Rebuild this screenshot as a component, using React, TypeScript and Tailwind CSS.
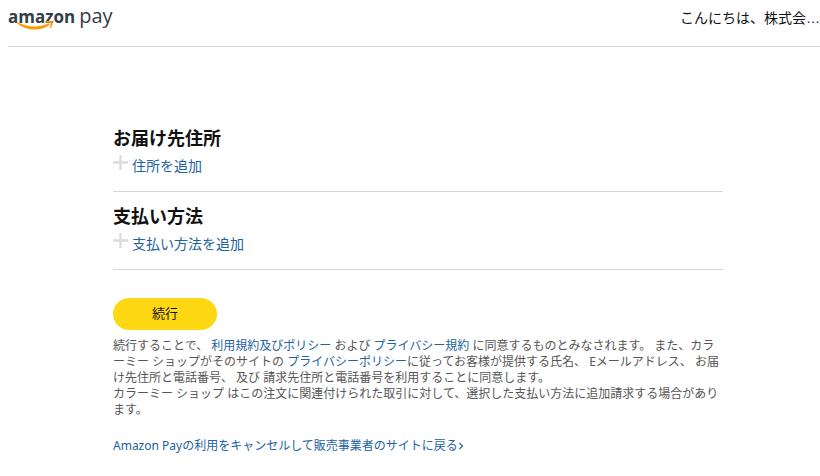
const sections = [
    { id: "address", title: "お届け先住所", action: "住所を追加" },
    { id: "payment", title: "支払い方法", action: "支払い方法を追加" },
];

const linkStyle = "text-[#2162a1] hover:underline";

const Logo = () => (
    <a href="#" aria-label="amazon pay" className="flex flex-col">
        <span className="flex items-baseline gap-1 leading-6 text-[#333e48] font-['Open_Sans',sans-serif]">
            <span className="text-[17px] font-bold">amazon</span>
            <span className="text-[20px]">pay</span>
        </span>
        <svg width="66" height="10" viewBox="0 0 66 10" className="-mt-2" aria-hidden="true">
            <path d="M9 1.500c.3-.5.8-.4 1.300-.1 9.400 5 20 5.400 30.200 1.200 1.100-.4 1.800.5.8 1.300C32.600 10.400 18.200 10 9.300 2.400c-.3-.3-.5-.6-.3-.9z" fill="#ff9900" />
            <path d="M37.800.9c2-1.400 6-1.500 6.800-.6.7.9-.1 5-2.200 6.800-.5.4-1 .1-.7-.5.7-1.500 1.400-3.900.8-4.500-.6-.6-2.900-.5-4.300-.3-.6.1-.8-.5-.4-.9z" fill="#ff9900" />
        </svg>
    </a>
);

const PlusIcon = () => (
    <svg width="15" height="15" viewBox="0 0 15 15" className="shrink-0" aria-hidden="true">
        <path d="M7.500 0v15M0 7.500h15" stroke="#dcdcdc" strokeWidth="2.400" />
    </svg>
);

export default function App() {
  return (
    <div lang="ja" className="bg-white text-[#111] font-['Noto_Sans','Noto_Sans_CJK_JP',sans-serif]">
        <header className="ml-2 h-[47px] flex justify-between items-start border-b border-[#d5d5d5]">
            <div className="pt-1">
                <Logo />
            </div>
            <span className="pt-2 text-sm leading-5 font-['Liberation_Sans','Noto_Sans_CJK_JP',sans-serif]">こんにちは、株式会…</span>
        </header>

        <main className="pl-4">
            <div className="max-w-[610px] mx-auto pt-[79px]">
                {sections.map((section) => (
                    <section key={section.id} className="h-[66px] mb-3 border-b border-[#d5d5d5]">
                        <h2 className="text-lg leading-6 font-bold">{section.title}</h2>
                        <div className="flex items-start gap-1 pt-[5px]">
                            <PlusIcon />
                            <a href="#" className={`${linkStyle} text-sm leading-[22px]`}>{section.action}</a>
                        </div>
                    </section>
                ))}

                <button type="button" className="mt-4 pb-0.5 w-[104px] h-8 rounded-full bg-[#ffd814] text-[13px] leading-5 cursor-pointer">
                    続行
                </button>

                <p className="mt-2 text-xs leading-4 text-[#565656] [line-break:anywhere]">
                    続行することで、 <a href="#" className={linkStyle}>利用規約及びポリシー</a> および <a href="#" className={linkStyle}>プライバシー規約</a> に同意するものとみなされます。 また、カラーミー ショップがそのサイトの <a href="#" className={linkStyle}>プライバシーポリシー</a>に従ってお客様が提供する氏名、 Eメールアドレス、 お届け先住所と電話番号、 及び 請求先住所と電話番号を利用することに同意します。
                    <br />
                    カラーミー ショップ はこの注文に関連付けられた取引に対して、選択した支払い方法に追加請求する場合があります。
                </p>

                <p className="mt-5 text-xs leading-4">
                    <a href="#" className={`${linkStyle} inline-flex items-center`}>
                        Amazon Payの利用をキャンセルして販売事業者のサイトに戻る
                        <svg width="6" height="8" viewBox="0 0 6 8" fill="none" aria-hidden="true">
                            <path d="M1.500 1l3 3-3 3" stroke="currentColor" strokeWidth="1.100" />
                        </svg>
                    </a>
                </p>
            </div>
        </main>
    </div>
  )
}
